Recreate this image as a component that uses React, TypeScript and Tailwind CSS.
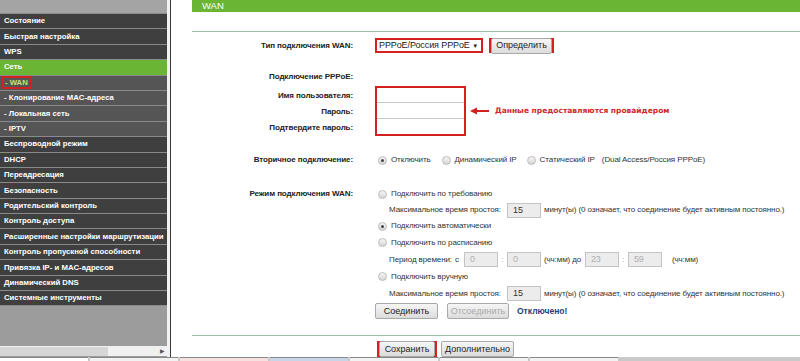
import React from "react";

const menu: { label: string; kind: "main" | "active" | "sub" | "current" }[] = [
  { label: "Состояние", kind: "main" },
  { label: "Быстрая настройка", kind: "main" },
  { label: "WPS", kind: "main" },
  { label: "Сеть", kind: "active" },
  { label: "- WAN", kind: "current" },
  { label: "- Клонирование MAC-адреса", kind: "sub" },
  { label: "- Локальная сеть", kind: "sub" },
  { label: "- IPTV", kind: "sub" },
  { label: "Беспроводной режим", kind: "main" },
  { label: "DHCP", kind: "main" },
  { label: "Переадресация", kind: "main" },
  { label: "Безопасность", kind: "main" },
  { label: "Родительский контроль", kind: "main" },
  { label: "Контроль доступа", kind: "main" },
  { label: "Расширенные настройки маршрутизации", kind: "main" },
  { label: "Контроль пропускной способности", kind: "main" },
  { label: "Привязка IP- и MAC-адресов", kind: "main" },
  { label: "Динамический DNS", kind: "main" },
  { label: "Системные инструменты", kind: "main" },
];

function Radio({ checked = false }: { checked?: boolean }) {
  return (
    <span className="flex h-[9px] w-[9px] shrink-0 items-center justify-center rounded-full border border-[#bcbcbc] bg-gradient-to-b from-[#f6f6f6] to-[#d6d6d6]">
      {checked && <span className="h-[3px] w-[3px] rounded-full bg-[#444]" />}
    </span>
  );
}

function Box({ value, disabled = false }: { value: string; disabled?: boolean }) {
  return (
    <span
      className={
        "flex h-[15px] w-[34px] shrink-0 items-center border border-[#c4c4c4] bg-[#ececec] pl-[5px] text-[9px] " +
        (disabled ? "text-[#b0b0b0]" : "text-[#333]")
      }
    >
      {value}
    </span>
  );
}

function Btn({ children, disabled = false, w }: { children: React.ReactNode; disabled?: boolean; w: string }) {
  return (
    <span
      className={
        "flex h-[16px] items-center justify-center rounded-[2px] border border-[#a9a9a9] bg-gradient-to-b from-[#f6f6f6] to-[#dcdcdc] text-[9px] tracking-normal " +
        w +
        (disabled ? " text-[#a8a8a8]" : " text-[#222]")
      }
    >
      {children}
    </span>
  );
}

function Row({ label, h, children }: { label?: string; h: string; children?: React.ReactNode }) {
  return (
    <div className={"flex items-center " + h}>
      <div className="w-[161px] shrink-0 text-right font-bold text-[#222]">{label}</div>
      <div className="ml-[22px] flex items-center">{children}</div>
    </div>
  );
}

export default function App() {
  return (
    <div className="flex h-[361px] w-[800px] flex-col overflow-hidden whitespace-nowrap bg-white font-['Liberation_Sans',Arial,sans-serif] text-[8px] leading-none tracking-[-0.1px]">
      <div className="flex min-h-0 flex-1">
        {/* sidebar */}
        <div className="flex w-[167px] shrink-0 flex-col bg-[#9c9c9c]">
          <div className="h-[13px] bg-[#a4a4a4]" />
          <div className="flex flex-col gap-px bg-[#8a8a8a] py-px">
            {menu.map((m) => (
              <div
                key={m.label}
                className={
                  "flex h-[14.4px] items-center overflow-hidden pl-[4px] text-[7.75px] font-bold tracking-normal text-white " +
                  (m.kind === "active"
                    ? "bg-[#6ab534]"
                    : m.kind === "main"
                    ? "bg-[#3f3f3f]"
                    : "bg-[#555555]")
                }
              >
                {m.kind === "current" ? (
                  <span className="-ml-[2px] flex h-[13px] items-center border-2 border-[#d42020] pl-px pr-[2px] text-[#c6e46a]">
                    - WAN
                  </span>
                ) : (
                  m.label
                )}
              </div>
            ))}
          </div>
          <div className="flex-1" />
          <div className="mb-px flex h-[10px] items-center bg-[#f0f0f0]">
            <div className="h-[9px] w-[108px] bg-[#d6d6d6]" />
            <div className="flex-1" />
            <span className="mr-[2px] text-[6px] text-[#555]">▶</span>
          </div>
        </div>
        <div className="w-[3px] shrink-0 bg-[#f2f2f2]" />
        <div className="w-px shrink-0 bg-[#3a3a3a]" />

        {/* main */}
        <div className="flex min-w-0 flex-1 flex-col pl-[21px]">
          <div className="flex h-[14px] items-center bg-[#6ab534] pl-[10px] text-[9.5px] tracking-normal text-white">WAN</div>
          <div className="mt-[19px] h-px bg-[#9cc0a4]" />

          <div className="mt-[6px]">
            <Row label="Тип подключения WAN:" h="h-[15px]">
              <span className="flex h-[15px] w-[108px] items-center justify-between border-2 border-[#d42020] bg-white pl-[2px] pr-[3px] text-[9px] text-[#222]">
                PPPoE/Россия PPPoE
                <span className="text-[6px]">▼</span>
              </span>
              <span className="ml-[6px] flex h-[15px] items-center border-2 border-[#d42020]">
                <Btn w="w-[61px] h-[11px]">Определить</Btn>
              </span>
            </Row>
          </div>

          <div className="mt-[16px]">
            <Row label="Подключение PPPoE:" h="h-[16px]" />
          </div>

          <div className="mt-px flex items-center">
            <div className="flex w-[161px] shrink-0 flex-col pt-px text-right font-bold text-[#222]">
              <div className="flex h-[16px] items-center justify-end">Имя пользователя:</div>
              <div className="flex h-[16px] items-center justify-end">Пароль:</div>
              <div className="flex h-[16px] items-center justify-end">Подтвердите пароль:</div>
            </div>
            <div className="ml-[22px] flex h-[50px] w-[91px] flex-col border-2 border-[#d42020] bg-white">
              <div className="h-[15px] border-b border-[#c8c8c8]" />
              <div className="h-[16px] border-b border-[#c8c8c8]" />
              <div className="flex-1" />
            </div>
            <svg width="20" height="8" viewBox="0 0 20 8" className="ml-[4px]">
              <path d="M3 4 H19" stroke="#d42020" strokeWidth="2" />
              <path d="M0 4 L7 0.5 L7 7.5 Z" fill="#d42020" />
            </svg>
            <span className="ml-[5px] font-['DejaVu_Sans',sans-serif] text-[7.5px] font-bold tracking-normal text-[#d02828]">
              Данные предоставляются провайдером
            </span>
          </div>

          <div className="mt-[16px] text-[#333]">
            <Row label="Вторичное подключение:" h="h-[16px]">
              <span className="ml-[3px]"><Radio checked /></span>
              <span className="ml-[4px]">Отключить</span>
              <span className="ml-[11px]"><Radio /></span>
              <span className="ml-[4px]">Динамический IP</span>
              <span className="ml-[10px]"><Radio /></span>
              <span className="ml-[4px]">Статический IP</span>
              <span className="ml-[7px]">(Dual Access/Россия PPPoE)</span>
            </Row>
          </div>

          <div className="mt-[18px] text-[#333]">
            <Row label="Режим подключения WAN:" h="h-[16px]">
              <span className="ml-[3px]"><Radio /></span>
              <span className="ml-[4px]">Подключить по требованию</span>
            </Row>
            <Row h="h-[16px]">
              <span className="ml-[14px] w-[118px]">Максимальное время простоя:</span>
              <Box value="15" />
              <span className="ml-[3px]">минут(ы) (0 означает, что соединение будет активным постоянно.)</span>
            </Row>
            <Row h="h-[16px]">
              <span className="ml-[3px]"><Radio checked /></span>
              <span className="ml-[4px]">Подключить автоматически</span>
            </Row>
            <Row h="h-[17px]">
              <span className="ml-[3px]"><Radio /></span>
              <span className="ml-[4px]">Подключить по расписанию</span>
            </Row>
            <Row h="h-[17px]">
              <span className="ml-[14px] w-[66px]">Период времени:</span>
              <span>с</span>
              <span className="ml-[5px]"><Box value="0" disabled /></span>
              <span className="w-[9px] text-center text-[#999]">:</span>
              <Box value="0" disabled />
              <span className="ml-[3px] w-[41px]">(чч:мм) до</span>
              <Box value="23" disabled />
              <span className="w-[9px] text-center text-[#999]">:</span>
              <Box value="59" disabled />
              <span className="ml-[10px]">(чч:мм)</span>
            </Row>
            <Row h="h-[17px]">
              <span className="ml-[3px]"><Radio /></span>
              <span className="ml-[4px]">Подключить вручную</span>
            </Row>
            <Row h="h-[17px]">
              <span className="ml-[14px] w-[118px]">Максимальное время простоя:</span>
              <Box value="15" />
              <span className="ml-[3px]">минут(ы) (0 означает, что соединение будет активным постоянно.)</span>
            </Row>
            <div className="mt-px">
              <Row h="h-[16px]">
                <Btn w="w-[63px]">Соединить</Btn>
                <span className="ml-[9px]"><Btn w="w-[62px]" disabled>Отсоединить</Btn></span>
                <span className="ml-[8px] text-[8.5px] font-bold tracking-normal text-[#1d3f78]">Отключено!</span>
              </Row>
            </div>
          </div>

          <div className="mt-[16px] h-px bg-[#9cc0a4]" />
          <div className="mt-[5px]">
            <Row h="h-[16px]">
              <span className="ml-[2px] flex h-[16px] items-center border-2 border-[#d42020]">
                <Btn w="w-[56px] h-[12px]">Сохранить</Btn>
              </span>
              <span className="ml-[4px]"><Btn w="w-[73px]">Дополнительно</Btn></span>
            </Row>
          </div>
        </div>
      </div>

      {/* taskbar strip */}
      <div className="flex h-[4px] shrink-0 gap-[2px] bg-[#c9c9c9]">
        <div className="w-[88px] border-t border-[#888] bg-white" />
        <div className="w-[88px] border-t border-[#888] bg-[#f2f2f2]" />
        <div className="w-[88px] border-t border-[#888] bg-[#f6e0e0]" />
        <div className="w-[78px] border-t border-[#888] bg-[#c8d4e8]" />
        <div className="w-[88px] border-t border-[#888] bg-[#f2f2f2]" />
        <div className="w-[88px] border-t border-[#888] bg-[#f2f2f2]" />
        <div className="w-[88px] border-t border-[#888] bg-[#f2f2f2]" />
      </div>
    </div>
  );
}
